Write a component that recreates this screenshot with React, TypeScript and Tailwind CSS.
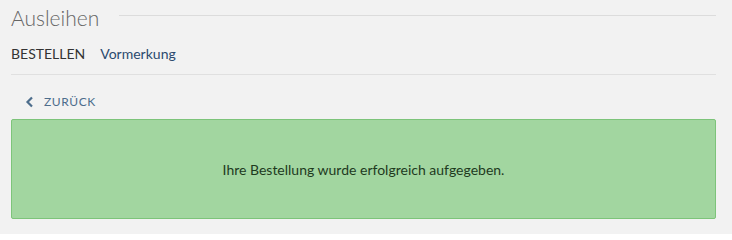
import React from 'react';

export default function App() {
    return (
        <div className="w-[732px] h-[234px] bg-[#f2f2f2] px-[11px] pr-[16px] text-[#333]" style={{ fontFamily: 'Lato, "Liberation Sans", sans-serif' }}>
            {/* heading */}
            <div className="flex items-center gap-[20px] h-[33px] pt-[1px]">
                <h2 className="text-[21px] font-light text-[#666] leading-none">Ausleihen</h2>
                <div className="flex-1 border-t border-[#dcdcdc] -mt-[4px]" />
            </div>

            {/* tabs */}
            <div className="flex items-center gap-[15px] h-[42px] border-b border-[#e0e0e0] text-[14px]">
                <span className="text-[#333]">BESTELLEN</span>
                <span className="text-[#2b4a6e]">Vormerkung</span>
            </div>

            {/* back link */}
            <div className="flex items-center h-[44px] pt-[10px] pl-[14px] text-[12px] tracking-[0.6px] text-[#4d6d8c]">
                <svg width="9" height="12" viewBox="0 0 9 12" className="mr-[10px]">
                    <path d="M7 1.5 L2.5 6 L7 10.5" fill="none" stroke="#4d6d8c" strokeWidth="2.2" />
                </svg>
                <span>ZURÜCK</span>
            </div>

            {/* success message */}
            <div className="h-[100px] flex items-center justify-center bg-[#a2d6a0] border border-[#7dc47a] rounded-[2px] text-[14px] text-[#1e3a1e]">
                Ihre Bestellung wurde erfolgreich aufgegeben.
            </div>
        </div>
    );
}
